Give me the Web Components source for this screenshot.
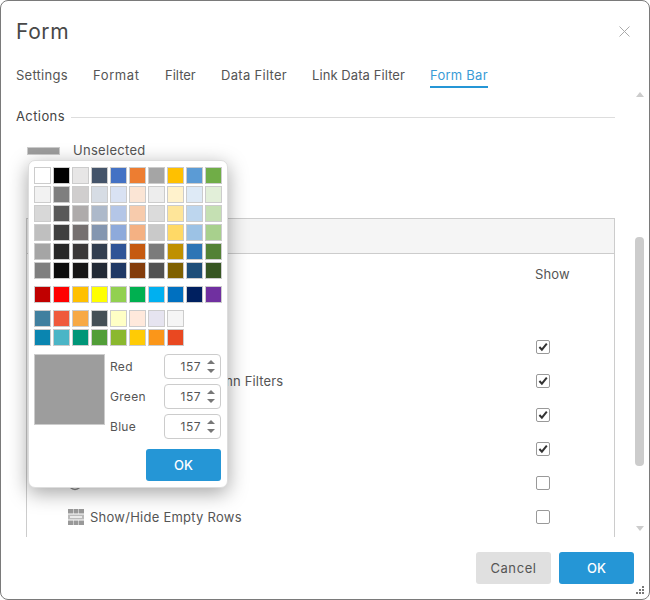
<!DOCTYPE html>
<html><head><meta charset="utf-8"><style>
html,body{margin:0;padding:0;background:#fff;font-family:"Inter","Noto Sans",sans-serif;}
</style></head><body>
<form-dialog heading="Form">
  <form-tabs slot="tabs">
    <form-tab w="52" ls=".25">Settings</form-tab>
    <form-tab w="47" ls=".6">Format</form-tab>
    <form-tab w="31">Filter</form-tab>
    <form-tab w="66" ls=".3">Data Filter</form-tab>
    <form-tab w="93" ls=".08">Link Data Filter</form-tab>
    <form-tab w="58" ls=".25" active>Form Bar</form-tab>
  </form-tabs>
  <section-title>Actions</section-title>
  <unselected-row>Unselected</unselected-row>
  <action-table>
    <action-row><span slot="head">Show</span></action-row>
    <action-row checked></action-row>
    <action-row checked style="letter-spacing:.15px">Show/Hide Grid Column Filters</action-row>
    <action-row checked></action-row>
    <action-row checked></action-row>
    <action-row icon="circle"></action-row>
    <action-row icon="grid">Show/Hide Empty Rows</action-row>
  </action-table>
  <color-picker slot="overlay"></color-picker>
</form-dialog>
<script>
function def(name, css, html, init){
  customElements.define(name, class extends HTMLElement{
    constructor(){super();this.attachShadow({mode:'open'});}
    connectedCallback(){
      if(this._d)return;this._d=1;
      this.shadowRoot.innerHTML='<style>'+css+'</style>'+(typeof html==='function'?html(this):html);
      if(init)init(this);
    }
  });
}
def('form-dialog',`
:host{position:relative;width:650px;height:600px;box-sizing:border-box;border:1px solid #7a7a7a;border-radius:8px;background:#fff;color:#555;overflow:hidden;display:flex;flex-direction:column}
.head{flex:none;height:60px;display:flex;align-items:center;justify-content:space-between;padding:0 19px 0 15px}
.title{font-size:21px;color:#484848;letter-spacing:.6px}
.x{width:11px;height:11px;display:block}
.tabs{flex:none;height:23px;padding:4px 0 0 15px}
.mid{flex:none;height:449px;display:flex;overflow:hidden}
.main{width:614px;flex:none;box-sizing:border-box;padding-left:15px}
.foot{flex:1;display:flex;justify-content:flex-end;align-items:flex-start;gap:8px;padding:15px 15px 0 0;position:relative}
.grip{position:absolute;right:4px;bottom:4px;width:9px;height:9px}
`,d=>`
<div class="head"><div class="title">${d.getAttribute('heading')}</div>
<svg class="x" viewBox="0 0 11 11"><path d="M.5.5l10 10M10.5.5l-10 10" stroke="#aaa" fill="none"/></svg></div>
<div class="tabs"><slot name="tabs"></slot></div>
<div class="mid"><div class="main"><slot></slot></div><scroll-bar></scroll-bar></div>
<div class="foot"><x-btn kind="gray">Cancel</x-btn><x-btn>OK</x-btn>
<svg class="grip" viewBox="0 0 9 9"><g fill="#777"><rect x="6" y="0" width="2" height="2"/><rect x="3" y="3" width="2" height="2"/><rect x="6" y="3" width="2" height="2"/><rect x="0" y="6" width="2" height="2"/><rect x="3" y="6" width="2" height="2"/><rect x="6" y="6" width="2" height="2"/></g></svg></div>
<slot name="overlay"></slot>`);
def('form-tabs',`:host{display:flex;gap:25px}`,`<slot></slot>`);
def('form-tab',`
:host{display:block;height:23px;box-sizing:border-box;font-size:13px;line-height:20px;white-space:nowrap;color:#555}
:host([active]){color:#3a9bd6;border-bottom:2px solid #2596d6}
`,`<slot></slot>`,e=>{e.style.width=e.getAttribute('w')+'px';e.style.letterSpacing=(e.getAttribute('ls')||0)+'px'});
def('section-title',`
:host{display:flex;align-items:center;gap:6px;height:20px;margin-top:18px;font-size:13px;color:#444;letter-spacing:.4px}
i{flex:1;height:1px;background:#ddd;margin-top:2px}
`,`<slot></slot><i></i>`);
def('unselected-row',`
:host{display:flex;align-items:center;gap:13px;margin:14px 0 0 11px;height:20px;font-size:13px;color:#555;letter-spacing:.3px}
i{width:33px;height:8px;box-sizing:border-box;background:#9d9d9d;border:1px solid #ccc;margin-top:2px}
`,`<i></i><slot></slot>`);
def('action-table',`
:host{display:block;margin:58px 0 0 10px;border:1px solid #ccc;border-bottom:0;height:400px;box-sizing:border-box}
.hd{height:34px;background:#f5f5f5;border-bottom:1px solid #ccc}
`,`<div class="hd"></div><slot></slot>`);
def('action-row',`
:host{display:flex;height:34px;align-items:center;padding-left:41px;font-size:13px;color:#555;box-sizing:border-box;letter-spacing:.25px}
:host([first]){height:76px;align-items:flex-start;padding-top:10px}
.ic{width:16px;height:16px;margin-right:6px;flex:none}
.t{flex:1;white-space:nowrap}
.c{width:79px;flex:none}
.c.s{line-height:20px;letter-spacing:.15px}
`,r=>{
  const ic=r.getAttribute('icon');
  const hasHead=r.querySelector('[slot=head]');
  if(hasHead){r.setAttribute('first','');return `<div class="t"></div><div class="c s"><slot name="head"></slot></div>`;}
  let svg='<span class="ic"></span>';
  if(ic==='grid') svg=`<svg class="ic" viewBox="0 0 16 16"><g fill="#999"><rect width="5" height="4.5"/><rect x="5.5" width="5" height="4.5"/><rect x="11" width="5" height="4.5"/><rect y="11.5" width="5" height="4.5"/><rect x="5.5" y="11.5" width="5" height="4.5"/><rect x="11" y="11.5" width="5" height="4.5"/></g><rect y="5.5" width="16" height="5" fill="#bbb"/><path d="M2 8h12" stroke="#fff" stroke-width="1.4"/></svg>`;
  if(ic==='circle') svg=`<svg class="ic" viewBox="0 0 16 16"><circle cx="7" cy="8" r="6.5" fill="none" stroke="#888" stroke-width="1.4"/></svg>`;
  const box=(r.hasAttribute('checked')||ic)?`<x-check ${r.hasAttribute('checked')?'checked':''}></x-check>`:'';
  return svg+`<div class="t"><slot></slot></div><div class="c">${box}</div>`;
});
def('x-check',`
:host{display:block;width:14px;height:14px;box-sizing:border-box;border:1px solid #999;border-radius:2px;background:#fff;margin-left:1px}
svg{display:block;width:12px;height:12px}
`,e=>e.hasAttribute('checked')?`<svg viewBox="0 0 12 12"><path d="M2.4 6l2.5 2.7L9.8 2.7" fill="none" stroke="#333" stroke-width="2"/></svg>`:'');
def('scroll-bar',`
:host{display:flex;flex-direction:column;width:9px;margin-left:20px;height:449px;align-items:center}
.a{width:0;height:0;border-left:4.5px solid transparent;border-right:4.5px solid transparent;flex:none}
.u{border-bottom:5px solid #ccc;margin-top:4px}
.t{width:9px;height:229px;background:#ccc;border-radius:4px;margin-top:140px;flex:none}
.d{border-top:5px solid #ccc;margin-top:60px}
`,`<i class="a u"></i><i class="t"></i><i class="a d"></i>`);
def('x-btn',`
:host{display:flex;align-items:center;justify-content:center;width:75px;height:32px;border-radius:3px;background:#2596d6;color:#fff;font-size:13px;font-weight:500}
:host([kind=gray]){background:#e0e0e0;color:#555;font-weight:400;letter-spacing:.6px}
`,`<slot></slot>`);
def('x-spin',`
:host{display:flex;align-items:center;width:57px;height:25px;box-sizing:border-box;border:1px solid #ccc;border-radius:4px;font-size:12px;color:#555;background:#fff;letter-spacing:.5px}
.v{flex:1;text-align:right}
.ar{width:19px;display:flex;flex-direction:column;align-items:center;gap:5px;flex:none}
.ar i{width:0;height:0;border-left:4px solid transparent;border-right:4px solid transparent}
.ar i:first-child{border-bottom:4px solid #777}
.ar i:last-child{border-top:4px solid #777}
`,e=>`<span class="v">${e.getAttribute('value')}</span><span class="ar"><i></i><i></i></span>`);
const P=[
['ffffff','000000','e7e6e6','44546a','4472c4','ed7d31','a5a5a5','ffc000','5b9bd5','70ad47'],
['f2f2f2','7f7f7f','d0cece','d6dce4','d9e2f3','fbe5d5','ededed','fff2cc','deeaf6','e2efd9'],
['d8d8d8','595959','aeabab','adb9ca','b4c6e7','f7cbac','dbdbdb','fee599','bdd6ee','c5e0b3'],
['bfbfbf','3f3f3f','757070','8496b0','8eaadb','f4b183','c9c9c9','ffd966','9cc2e5','a8d08d'],
['a5a5a5','262626','3a3838','323e4f','2f5496','c55a11','7b7b7b','bf9000','2e75b5','538135'],
['7f7f7f','0c0c0c','171616','222a35','1f3864','833c0b','525252','7f6000','1e4e79','375623']];
const S=['c00000','ff0000','ffc000','ffff00','92d050','00b050','00b0f0','0070c0','002060','7030a0'];
const T=[['41809f','ef5a3c','f7a945','455056','ffffc5','ffe9dc','e6e4f0','f5f5f5'],['0a85b0','4bb5c6','009678','529e38','8bb82f','ffcb05','fb9619','e94821']];
const sw=a=>a.map(r=>r.map(c=>`<i style="background:#${c}"></i>`).join('')+'<b></b>'.repeat(10-r.length)).join('');
def('color-picker',`
:host{position:absolute;left:27px;top:159px;width:200px;height:328px;box-sizing:border-box;background:#fff;border:1px solid #ddd;border-radius:7px;box-shadow:0 5px 20px rgba(0,0,0,.36);padding:6px 6px 0 5px;color:#555;font-size:12px;letter-spacing:.3px}
.g{display:grid;grid-template-columns:repeat(10,17px);grid-auto-rows:17px;gap:2px}
.g i{display:block;box-sizing:border-box;border:1px solid #ccc;}
.low{display:flex;gap:5px;margin-top:8px}
.pv{width:71px;height:71px;box-sizing:border-box;background:#9d9d9d;border:1px solid #ccc;flex:none}
.f{flex:1;display:grid;grid-template-columns:1fr 57px;grid-auto-rows:25px;row-gap:5px;align-items:center}
.ok{display:flex;justify-content:flex-end;margin-top:10px;letter-spacing:0}
`,`<div class="g">${sw(P)}</div><div class="g" style="margin-top:7px">${sw([S])}</div><div class="g" style="margin-top:7px">${sw(T)}</div>
<div class="low"><div class="pv"></div><div class="f"><span>Red</span><x-spin value="157"></x-spin><span>Green</span><x-spin value="157"></x-spin><span>Blue</span><x-spin value="157"></x-spin></div></div>
<div class="ok"><x-btn>OK</x-btn></div>`);
</script>
</body></html>
